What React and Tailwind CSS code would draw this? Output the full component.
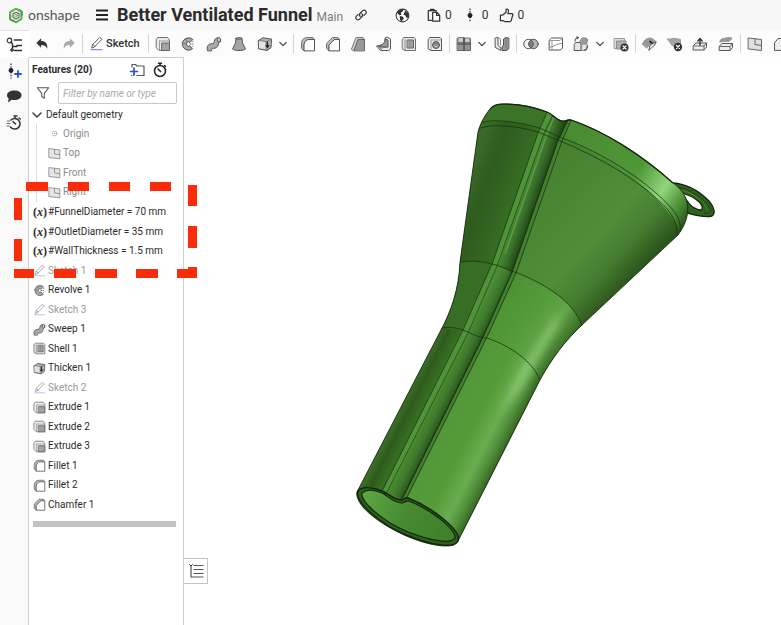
import React, { useState } from 'react';
import clsx from 'clsx';

const Svg = ({ children, className = 'w-4 h-4', box = '0 0 16 16' }) => (
  <svg
    viewBox={box}
    className={clsx('shrink-0', className)}
    fill="none"
    stroke="#555"
    strokeWidth="1"
    strokeLinejoin="round"
    strokeLinecap="round"
    aria-hidden="true"
  >
    {children}
  </svg>
);

const icons = {
  extrude: (
    <>
      <path d="M1.500 3L3 1.500h9.500L14.500 4v10.500H4L1.500 12z" fill="#ececec" stroke="#707070" />
      <path d="M4.500 5h9.500M4.500 5V14" stroke="#999" />
      <path d="M7 7h7.500v7.500H7z" fill="#a2a2a2" stroke="#666" />
    </>
  ),
  revolve: (
    <>
      <path d="M12.500 3.200A6.200 6.200 0 1 0 12.500 12.800L9.800 9.800A2.200 2.200 0 1 1 9.800 6.200z" fill="#aaa" />
      <path d="M5.500 2.500l1.500 3M2 7l3.500.7" stroke="#777" />
      <path d="M10 8h1M12.500 8h.5M13 5.500l.2.200M13 10.500l.2-.2" stroke="#555" />
    </>
  ),
  sweep: (
    <>
      <path d="M1.500 14.500C.5 11 1.500 8.500 4.500 8c2.500-.5 3.500-.5 3.800-2.500C8.600 3 10 1.800 12.500 1.800l2 4c-2 .2-2 1.700-2.300 3.200-.6 2.700-2.500 3.300-4.700 3.300-1.500 0-1.800.7-2 2.200z" fill="#aaa" />
      <ellipse cx="13" cy="3.800" rx="1.600" ry="2.200" fill="#ddd" />
    </>
  ),
  loft: (
    <>
      <path d="M5 2.500L4.500 7 1.500 13c2.500 2 10.500 2 13 0l-3-6L11 2.500z" fill="#a4a4a4" />
      <path d="M5 2.500c1.500-1 4.500-1 6 0-1.500 1-4.500 1-6 0z" fill="#ddd" />
    </>
  ),
  thicken: (
    <>
      <path d="M1.500 4.500L6 1.800l8.500 1.400-.5 8.500-4 2.800-8-1.500z" fill="#b5b5b5" />
      <path d="M1.500 4.500l8 1.200 5-2.500M9.500 5.700l.5 8.800" stroke="#777" />
      <path d="M2 5l6 1v7l-6-1z" fill="#e4e4e4" stroke="none" />
      <path d="M10.500 6v5M9 9.500l1.500 2 1.500-2" stroke="#222" strokeWidth="1.200" />
    </>
  ),
  fillet: (
    <>
      <path d="M1.500 12V7.500C1.500 4 4 1.500 7.500 1.500H13l1.500 2-6 .5C6 4 4 6 4 9v5.500z" fill="#bdbdbd" stroke="#707070" />
      <path d="M4 14.500V9c0-3 2-5.500 5-5.500h5.500v11z" fill="#fff" />
    </>
  ),
  chamfer: (
    <>
      <path d="M1.500 12V7.500l6-6H13l1.500 2H9.500L4 9v5.500z" fill="#bdbdbd" stroke="#707070" />
      <path d="M4 14.500V9l5.500-5.500h5v11z" fill="#fff" />
    </>
  ),
  draft: (
    <>
      <path d="M1.500 13L6 1.500h7l1.500 2-5 .5L4 14.500z" fill="#ccc" stroke="#777" />
      <path d="M4 14.500L8 3.500h6.500v11z" fill="#999" stroke="#666" />
    </>
  ),
  rib: (
    <>
      <path d="M1 10l8-2V2l2-1 3.500 2v10l-2 1.500H5z" fill="#eee" />
      <path d="M3 10.500C7 9 9 6 9.500 3l2.500 1v7H7z" fill="#999" />
      <path d="M1 10l4 2v2.500M5 12l7-1" stroke="#777" />
    </>
  ),
  shell: (
    <>
      <path d="M1.500 3L3 1.500h10l1.500 1.500v11.500H4L1.500 13z" fill="#e8e8e8" stroke="#707070" />
      <path d="M6.500 4h6v8h-6z" fill="#a2a2a2" stroke="#666" />
      <path d="M4 3.500v10.500M9 4v8" stroke="#888" />
    </>
  ),
  hole: (
    <>
      <path d="M1.500 3L3 1.500h10l1.500 1.500v11.500H4L1.500 13z" fill="#f1f1f1" />
      <path d="M4 4h10M4 4v10" stroke="#999" />
      <circle cx="9" cy="9" r="3.500" fill="#888" />
      <path d="M7.200 9.700a2 2 0 0 0 3.600.2" stroke="#e2e2e2" />
    </>
  ),
  pattern: (
    <>
      <path d="M1.500 2.500h13v12h-13z" fill="#929292" stroke="#666" />
      <path d="M3 1.500h4.500v5H2V2zM9 2h5v4.500H9z" fill="#ccc" stroke="#777" />
      <path d="M8 1.500v13M1.500 8h13" stroke="#444" strokeWidth="1.200" />
    </>
  ),
  mirror: (
    <>
      <path d="M1.500 2L4 1.500v8l3 2.500v2.500l-5.500-3z" fill="#ececec" />
      <path d="M4 1.500L6.500 3v6" stroke="#888" />
      <path d="M14.500 2L11.500 1.500 9.500 3v6L8 11v3.500h4.500l2-1.500z" fill="#999" />
      <path d="M12 2v12" stroke="#777" />
    </>
  ),
  boolean: (
    <>
      <circle cx="5.500" cy="8" r="4.700" fill="#f4f4f4" />
      <circle cx="10.500" cy="8" r="4.700" fill="#b4b4b4" />
      <path d="M8 4a4.700 4.700 0 0 1 0 8 4.700 4.700 0 0 1 0-8z" fill="#808080" />
    </>
  ),
  split: (
    <>
      <path d="M1.500 4l2-2h11v10l-2 2h-11z" fill="#fff" />
      <path d="M1.500 4.500h10.500l2.500-2.500M4 5v8.500" stroke="#999" />
      <path d="M2 11c4 0 6-3.500 12-3.500" stroke="#888" />
    </>
  ),
  transform: (
    <>
      <path d="M1.500 8l1-1.500H7L8 8v6.500H1.500z" fill="#e6e6e6" />
      <path d="M9 9l1-1.500h4V13l-1 1.500H9z" fill="#e6e6e6" stroke="#888" />
      <path d="M7 5l2-3h4l2 2-2 4H9z" fill="#999" stroke="#888" />
      <path d="M2 5c0-2 1-3.500 3-3.500M4 .8l1.500.8L4.200 3M14.500 10c0 2-1 3.500-3 4" stroke="#333" />
    </>
  ),
  deletePart: (
    <>
      <path d="M1.500 2.500h10v10h-10z" fill="#ddd" stroke="#999" />
      <path d="M4 5h9v8H4z" fill="#b0b0b0" stroke="#888" />
      <circle cx="11.500" cy="11.500" r="4" fill="#333" stroke="none" />
      <path d="M10 10l3 3M13 10l-3 3" stroke="#fff" strokeWidth="1.200" />
    </>
  ),
  moveFace: (
    <>
      <path d="M.5 8C2 3.500 6 1 10 2.500L14.500 6 8 8l-3 4z" fill="#999" stroke="#999" />
      <path d="M7 14l1-5 6-3c-1 3-2 4-3 4.500-1 1-2 2-4 3.500z" fill="#eee" />
      <path d="M8 5.500l2 1.500" stroke="#222" strokeWidth="1.600" />
    </>
  ),
  deleteFace: (
    <>
      <path d="M.5 3c3 1 5-1.500 8-.5l5 1v8L6 10z" fill="#a4a4a4" stroke="#999" />
      <circle cx="11" cy="11" r="4.200" fill="#333" stroke="none" />
      <path d="M9.500 9.500l3 3M12.500 9.500l-3 3" stroke="#fff" strokeWidth="1.200" />
    </>
  ),
  replaceFace: (
    <>
      <path d="M1.500 9.500L4 7h10.500v4L12 14H1.500z" fill="#eee" />
      <path d="M1.500 10H12l2.500-3M12 10v4" stroke="#666" />
      <path d="M8 9V3M5.800 5L8 2.500 10.200 5" stroke="#333" strokeWidth="1.400" />
    </>
  ),
  offset: (
    <>
      <path d="M1.500 10L4 7.500h10.500v4L12 14.500H1.500z" fill="#eee" />
      <path d="M1.500 10.500H12l2.500-3M12 10.500v4" stroke="#666" />
      <path d="M2 5c2-4 4-2 6-3s4-.5 6 0c-1 1.500-2 3.500-4 3.500S5 5 2 6z" fill="#999" stroke="#999" />
    </>
  ),
  plane: (
    <>
      <path d="M1.500 2l13 1.500v11l-13-1.500z" fill="#e0e0e0" stroke="#666" />
      <path d="M8 3v5.500l6.500 1" stroke="#666" />
    </>
  ),
  frame: <path d="M1.500 14V7L5 2.500h9.500V14z" fill="#eee" />,
  sketch: (
    <>
      <path d="M3 12.500l1-3.500 7.500-7.500 2.300 2L6 11.500z" fill="#fff" />
      <path d="M4.200 9l2 2.200" />
      <path d="M2 14.500h12" stroke="#7c9bd6" strokeWidth="1.200" />
    </>
  ),
  origin: (
    <>
      <circle cx="8" cy="8" r="3" stroke="#999" />
      <circle cx="8" cy="8" r="1" fill="#888" stroke="none" />
    </>
  ),
};

const Icon = ({ name, className }) => <Svg className={className}>{icons[name]}</Svg>;

const Chevron = ({ className = 'w-2 h-2' }) => (
  <Svg box="0 0 10 8" className={className}>
    <path d="M1 2l4 4 4-4" strokeWidth="1.600" stroke="#444" />
  </Svg>
);

const Separator = () => <span className="w-px h-[19px] mx-[6px] bg-[#d4d4d4] shrink-0" />;

const ToolGroup = ({ names, className }) => (
  <div className={clsx('flex justify-between shrink-0', className)}>
    {names.map((name) => (
      <button key={name} type="button" aria-label={name}>
        <Icon name={name} />
      </button>
    ))}
  </div>
);

const DropButton = ({ label, className }) => (
  <button type="button" aria-label={label} className={clsx('shrink-0', className)}>
    <Chevron />
  </button>
);

const Header = () => (
  <header className="flex items-center h-[30px] pl-2 bg-[#f7f7f7] shrink-0">
    <a href="#home" className="flex items-center">
      <Svg box="0 0 16 18" className="w-4 h-[17px]">
        <path d="M1.800 11V5.500L8 1.800l3 1.700M13.800 5v7.500L8 16.200l-3-1.700" stroke="#58b947" strokeWidth="2.200" />
        <path d="M1.800 9v4l3.500 2M14 9V5l-3-2" stroke="#4aa83b" strokeWidth="2.200" />
        <path d="M8 5.500l3.200 1.800v3.600L8 12.700l-3.200-1.800V7.300z" stroke="#666" strokeWidth="1.300" />
        <circle cx="8" cy="9.100" r="1.300" stroke="#777" strokeWidth=".8" />
      </Svg>
      <span className="w-[50px] ml-1 font-[Lato,sans-serif] text-[14px] leading-4 text-[#555]">onshape</span>
    </a>
    <button type="button" aria-label="Menu" className="ml-[17px]">
      <Svg box="0 0 14 14" className="w-[14px] h-[14px]">
        <path d="M1 2.500h12M1 7h12M1 11.500h12" stroke="#222" strokeWidth="2" strokeLinecap="butt" />
      </Svg>
    </button>
    <h1 className="ml-2 text-[18px] leading-6 font-bold whitespace-nowrap text-[#2b2b2b]">Better Ventilated Funnel</h1>
    <span className="ml-1 pt-1 text-[12px] leading-6 text-[#7c7c7c]">Main</span>
    <button type="button" aria-label="Copy link" className="ml-[11px]">
      <Svg className="w-[14px] h-[14px]">
        <path d="M7 9.500a2.500 2.500 0 0 1 0-3.500l3-3a2.500 2.500 0 0 1 3.500 3.500L11.500 8.500M9 6.500a2.500 2.500 0 0 1 0 3.500l-3 3a2.500 2.500 0 0 1-3.500-3.500l2-2" stroke="#333" strokeWidth="1.400" />
      </Svg>
    </button>
    <button type="button" aria-label="Public document" className="ml-[27px]">
      <Svg className="w-[15px] h-[15px]">
        <circle cx="8" cy="8" r="6.800" stroke="#333" strokeWidth="1.100" fill="#fff" />
        <path d="M3 3.500C5 1.500 7 1.300 9 1.500L8 4 6 5l1 2-2 1-3-3zM5 8.500l3 .5 1.500 2L7 14.500 5.500 13zM11 3l3 2 .7 4-2 2-1.700-3-2-1z" fill="#333" stroke="none" />
      </Svg>
    </button>
    <div className="flex items-center ml-[17px] text-[12px] leading-4 text-[#333]">
      <Svg className="w-[14px] h-[15px]">
        <path d="M6 13.500H1.500V2.500h9V4M4 2.500V1h4v1.500" stroke="#333" strokeWidth="1.400" />
        <path d="M6.500 4.500h5L14.500 8v6.500h-8zM11 4.500V8h3.500" fill="#fff" stroke="#333" strokeWidth="1.400" />
      </Svg>
      <span className="ml-1">0</span>
      <Svg box="0 0 8 16" className="w-2 h-[15px] ml-[14px]">
        <path d="M4 1v14" stroke="#333" strokeWidth="1.400" strokeDasharray=".5 2.500" />
        <circle cx="4" cy="8" r="2.600" fill="#222" stroke="none" />
      </Svg>
      <span className="ml-2">0</span>
      <Svg className="w-[15px] h-[15px] ml-[10px]">
        <path d="M1.500 7.500H4l3.500-3V1.500c2-.7 3 .5 2.500 2.500L9.500 6H14c1 0 1 1.500.5 2L13 13.500c-.2.800-.8 1-1.500 1H6L4.500 13.500h-3z" stroke="#333" strokeWidth="1.300" />
      </Svg>
      <span className="ml-1">0</span>
    </div>
  </header>
);

const Rail = () => (
  <nav className="flex flex-col items-center w-[29px] shrink-0 bg-[#f9f9f9] border-r border-[#d0d0d0]">
    <button type="button" aria-label="Feature list" className="flex items-center justify-center w-[29px] h-7 bg-white border-t border-[#ddd]">
      <Svg className="w-4 h-4">
        <circle cx="3.500" cy="3.500" r="2.300" stroke="#333" strokeWidth="1.200" />
        <path d="M5 5l1.500 2v5M6.500 9.500H11" stroke="#333" strokeWidth="1.400" />
        <path d="M8.500 3h7M11 8.500h4.500M8.500 13.500h7" stroke="#333" strokeWidth="1.600" />
        <circle cx="6" cy="13" r="1.400" fill="#333" />
      </Svg>
    </button>
    <button type="button" aria-label="Versions" className="mt-[5px]">
      <Svg className="w-4 h-4">
        <path d="M5 1v14" stroke="#333" strokeWidth="1.300" strokeDasharray=".5 2.300" />
        <circle cx="5" cy="7.500" r="2.400" fill="#222" stroke="none" />
        <path d="M9 11h6M12 8v6" stroke="#2355c4" strokeWidth="1.800" />
      </Svg>
    </button>
    <button type="button" aria-label="Comments" className="mt-[9px]">
      <Svg className="w-4 h-4">
        <path d="M8.500 2.500c4 0 7 2 7 4.800s-3 4.800-7 4.800c-1 0-2-.1-2.800-.4L2 14.500l.7-4C1.500 9.600 1 8.500 1 7.300c0-2.800 3.500-4.800 7.500-4.800z" fill="#333" stroke="none" />
      </Svg>
    </button>
    <button type="button" aria-label="History" className="mt-[11px]">
      <Svg className="w-4 h-4">
        <path d="M5 5a5.300 5.300 0 1 1-.5 7M8 1h3M13 3l1.300 1M9 3V1.500M7 6.500l2.500 2.500" stroke="#333" strokeWidth="1.500" />
        <path d="M1.500 6H4M1 8.500h3M1 11h2.500" stroke="#666" />
      </Svg>
    </button>
  </nav>
);

const Toolbar = () => (
  <div className="flex items-center h-[27px] pl-[6px] overflow-hidden bg-[#fcfcfc] shrink-0">
    <button type="button" aria-label="Undo" className="shrink-0">
      <Svg className="w-[14px] h-[14px]">
        <path d="M7 1.500v3.200c5 0 7.500 3 7 8.800-1.500-3.500-3.500-4.500-7-4.500v3.300L1.500 6.800z" fill="#333" stroke="none" />
      </Svg>
    </button>
    <button type="button" aria-label="Redo" className="ml-[13px] shrink-0">
      <Svg className="w-[14px] h-[14px]">
        <path d="M9 1.500v3.200c-5 0-7.500 3-7 8.800 1.500-3.500 3.500-4.500 7-4.500v3.300l5.500-5.500z" fill="#aaa" stroke="none" />
      </Svg>
    </button>
    <Separator />
    <button type="button" className="flex items-center gap-[2px] pr-[2px] text-[11px] leading-4 font-medium text-[#333] shrink-0">
      <Icon name="sketch" className="w-[15px] h-[15px]" />
      Sketch
    </button>
    <Separator />
    <ToolGroup className="w-[118px]" names={['extrude', 'revolve', 'sweep', 'loft', 'thicken']} />
    <DropButton label="More solids" className="ml-[6px]" />
    <Separator />
    <ToolGroup className="w-[143px]" names={['fillet', 'chamfer', 'draft', 'rib', 'shell', 'hole']} />
    <Separator />
    <ToolGroup className="w-4" names={['pattern']} />
    <DropButton label="More patterns" className="ml-[6px]" />
    <ToolGroup className="w-4 ml-2" names={['mirror']} />
    <Separator />
    <ToolGroup className="w-[66px]" names={['boolean', 'split', 'transform']} />
    <DropButton label="More transforms" className="ml-[7px]" />
    <ToolGroup className="w-4 ml-[9px]" names={['deletePart']} />
    <Separator />
    <ToolGroup className="w-[92px]" names={['moveFace', 'deleteFace', 'replaceFace', 'offset']} />
    <Separator />
    <ToolGroup className="w-[42px]" names={['plane', 'frame']} />
  </div>
);

const geometry = [
  { name: 'Origin', icon: 'origin' },
  { name: 'Top', icon: 'plane' },
  { name: 'Front', icon: 'plane' },
  { name: 'Right', icon: 'plane' },
];

const features = [
  { name: '#FunnelDiameter = 70 mm', variable: true },
  { name: '#OutletDiameter = 35 mm', variable: true },
  { name: '#WallThickness = 1.5 mm', variable: true },
  { name: 'Sketch 1', icon: 'sketch', hidden: true },
  { name: 'Revolve 1', icon: 'revolve' },
  { name: 'Sketch 3', icon: 'sketch', hidden: true },
  { name: 'Sweep 1', icon: 'sweep' },
  { name: 'Shell 1', icon: 'shell' },
  { name: 'Thicken 1', icon: 'thicken' },
  { name: 'Sketch 2', icon: 'sketch', hidden: true },
  { name: 'Extrude 1', icon: 'extrude' },
  { name: 'Extrude 2', icon: 'extrude' },
  { name: 'Extrude 3', icon: 'extrude' },
  { name: 'Fillet 1', icon: 'fillet' },
  { name: 'Fillet 2', icon: 'fillet' },
  { name: 'Chamfer 1', icon: 'chamfer' },
];

const FeaturePanel = () => {
  const [filter, setFilter] = useState('');
  const [open, setOpen] = useState(true);
  const match = (item) => item.name.toLowerCase().includes(filter.toLowerCase());

  return (
    <aside className="w-[155px] shrink-0 bg-white border-t border-r border-[#d0d0d0] text-[10px] leading-4 text-[#2b2b2b]">
      <div className="flex items-center h-6 pl-[3px] pr-[15px]">
        <h2 className="flex-1 font-bold">Features (20)</h2>
        <button type="button" aria-label="New folder">
          <Svg className="w-4 h-4">
            <path d="M3 5V2.500h3.500L8 4h7v9.500H8" strokeWidth="1.200" />
            <path d="M1.500 9.500h7M5 6v7" stroke="#2355c4" strokeWidth="1.700" />
            <path d="M3 13.500h-.5" />
          </Svg>
        </button>
        <button type="button" aria-label="Regeneration times" className="ml-[7px]">
          <Svg className="w-4 h-4">
            <circle cx="8" cy="9" r="5.500" stroke="#222" strokeWidth="1.500" />
            <path d="M6.500 1.200h3M8 1.500V3M12.500 3.500l1 1M6 7l2.500 2.500" stroke="#222" strokeWidth="1.500" />
          </Svg>
        </button>
      </div>
      <div className="flex items-center pl-[7px] pr-[6px]">
        <Svg className="w-[14px] h-[14px]">
          <path d="M1.500 2h13L9.500 8.500V14l-3-2V8.500z" strokeWidth="1.200" />
        </Svg>
        <input
          type="text"
          aria-label="Filter features"
          value={filter}
          onChange={(e) => setFilter(e.target.value)}
          placeholder="Filter by name or type"
          className="flex-1 min-w-0 h-[22px] ml-2 px-1 bg-white border border-[#c8c8c8] rounded-[2px] text-[10px] italic placeholder:text-[#aaa]"
        />
      </div>
      <button type="button" onClick={() => setOpen(!open)} className="flex items-center h-[19px] pl-[3px] mt-[1px]">
        <Chevron className={clsx('w-[10px] h-2', !open && '-rotate-90')} />
        <span className="ml-1">Default geometry</span>
      </button>
      {open && (
        <ul className="ml-[7px] border-l border-[#ddd] text-[#8a8a8a]">
          {geometry.filter(match).map((item) => (
            <li key={item.name} className="flex items-center pl-[11px] h-[19px] even:h-5">
              <Icon name={item.icon} className="w-[13px] h-[13px] opacity-80" />
              <span className="ml-[2px]">{item.name}</span>
            </li>
          ))}
        </ul>
      )}
      <ul>
        {features.filter(match).map((item) => (
          <li key={item.name} className={clsx('flex items-center pl-1 h-5 even:h-[19px] whitespace-nowrap', item.hidden && 'text-[#999]')}>
            {item.variable ? (
              <span className="w-[13px] font-['Liberation_Serif',serif] text-[12px] font-bold">
                (<i>x</i>)
              </span>
            ) : (
              <Icon name={item.icon} className={clsx('w-[13px] h-[13px]', item.hidden && 'opacity-60')} />
            )}
            <span className="ml-[2px]">{item.name}</span>
          </li>
        ))}
      </ul>
      <div className="h-[6px] ml-1 mr-[7px] mt-[7px] bg-[#c2c2c2]" />
    </aside>
  );
};

const BODY =
  'M478 132C480 124 485 115 490 109C493 105 498 104 504 104C520 104 534 107 547 112C553 114 556 120 562 121C565 122 567 119 571 120C604 131 642 155 673 183C680 188 684 193 686 199C690 210 687 223 678 235L582 325C565 341 552 358 540 380L458 541C456 545 452 546 446 546C424 546 390 531 370 514C360 506 354 495 358 490L442 328C450 313 459 290 460 262Z';

const OPENING =
  'M358 491C362 486 373 487 382 491C388 493 393 500 402 500C404 500 405 497 408 498C431 507 462 530 458 541C454 549 430 545 406 535C380 524 354 502 358 491Z';

const Funnel = () => (
  <svg viewBox="184 57 597 567" className="block w-full" fill="none" stroke="#13260c" strokeWidth="1" role="img" aria-label="Funnel model">
    <defs>
      <clipPath id="body"><path d={BODY} /></clipPath>
      <linearGradient id="coneLeft" gradientUnits="userSpaceOnUse" x1="466" y1="190" x2="518" y2="208">
        <stop offset="0" stopColor="#39682a" />
        <stop offset=".3" stopColor="#2e5b1e" />
        <stop offset="1" stopColor="#387024" />
      </linearGradient>
      <linearGradient id="coneRight" gradientUnits="userSpaceOnUse" x1="540" y1="184" x2="636" y2="274">
        <stop offset="0" stopColor="#488231" />
        <stop offset=".58" stopColor="#4f8f37" />
        <stop offset=".8" stopColor="#467d31" />
        <stop offset="1" stopColor="#2c551c" />
      </linearGradient>
      <linearGradient id="rim" gradientUnits="userSpaceOnUse" x1="565" y1="130" x2="690" y2="215">
        <stop offset="0" stopColor="#4a8a32" />
        <stop offset=".55" stopColor="#4f9737" />
        <stop offset=".76" stopColor="#92d67c" />
        <stop offset=".9" stopColor="#4e9038" />
        <stop offset="1" stopColor="#2b581c" />
      </linearGradient>
      <linearGradient id="neck" gradientUnits="userSpaceOnUse" x1="500" y1="300" x2="566" y2="348">
        <stop offset="0" stopColor="#4d9134" />
        <stop offset=".45" stopColor="#559c3b" />
        <stop offset=".72" stopColor="#63a54a" />
        <stop offset="1" stopColor="#35681f" />
      </linearGradient>
      <linearGradient id="tube" gradientUnits="userSpaceOnUse" x1="443" y1="425" x2="504" y2="456">
        <stop offset="0" stopColor="#52973a" />
        <stop offset=".42" stopColor="#559c38" />
        <stop offset=".68" stopColor="#69ad51" />
        <stop offset=".84" stopColor="#4f8e39" />
        <stop offset="1" stopColor="#2e5c1d" />
      </linearGradient>
      <linearGradient id="tubeLeft" gradientUnits="userSpaceOnUse" x1="398" y1="412" x2="424" y2="425">
        <stop offset="0" stopColor="#3d6f2a" />
        <stop offset=".3" stopColor="#2e5b1d" />
        <stop offset="1" stopColor="#417d2b" />
      </linearGradient>
      <linearGradient id="grooveTop" gradientUnits="userSpaceOnUse" x1="519" y1="200" x2="536" y2="206">
        <stop offset="0" stopColor="#4c8e35" />
        <stop offset=".5" stopColor="#38712a" />
        <stop offset="1" stopColor="#204315" />
      </linearGradient>
      <linearGradient id="grooveLow" gradientUnits="userSpaceOnUse" x1="429" y1="410" x2="445" y2="418">
        <stop offset="0" stopColor="#4b8c34" />
        <stop offset=".5" stopColor="#3c762b" />
        <stop offset="1" stopColor="#23491a" />
      </linearGradient>
      <linearGradient id="inside" gradientUnits="userSpaceOnUse" x1="366" y1="498" x2="446" y2="532">
        <stop offset="0" stopColor="#5ba443" />
        <stop offset=".5" stopColor="#478a31" />
        <stop offset="1" stopColor="#40802b" />
      </linearGradient>
      <filter id="soft" x="-50%" y="-50%" width="200%" height="200%"><feGaussianBlur stdDeviation="5" /></filter>
    </defs>

    {/* hanging ring */}
    <path fillRule="evenodd" d="M673 183C688 184 701 193 709 201C714 207 716 213 712 216C704 218 695 215 687 213L673 200ZM682 193C688 203 692 209 701 210C706 206 696 197 682 193Z" fill="#2f6220" strokeWidth="1.300" />
    <path d="M676 187C690 188 703 198 710 208C712 212 709 214 704 213" stroke="#1c3d12" />
    <path d="M680 190C692 192 706 202 707 210" stroke="#4b8a36" />

    <g clipPath="url(#body)" stroke="none">
      <path d="M340 90H740V560H340z" fill="url(#coneRight)" />
      <path d="M571 115L562 138C604 155 660 190 680 231L720 220L690 170Z" fill="url(#rim)" />
      <path d="M515 272C546 284 574 302 582 326L620 340L560 400L540 380C533 362 511 345 486 338Z" fill="url(#neck)" />
      <path d="M486 338C511 345 533 362 540 380L560 400L460 560L400 500Z" fill="url(#tube)" />
      <path d="M560 312C545 338 520 372 502 414C510 402 530 374 540 352C550 336 558 326 560 312Z" fill="#a5e38d" filter="url(#soft)" />
      <path d="M470 90H552L538 133L492 264L463 331L440 320V250Z" fill="url(#coneLeft)" />
      <path d="M475 100H555L541 129C520 121 490 118 479 126Z" fill="#3b7327" />
      <path d="M492 264C480 261 470 260 455 263L435 330L463 331Z" fill="#376d25" />
      <path d="M435 327L463 331L382 492L340 500Z" fill="url(#tubeLeft)" />
      <path d="M547 111L538 133L492 264L462 331L382 492H387L468 333L497 266L544 133L553 114Z" fill="#4f9438" />
      <path d="M553 114L544 133L497 266L468 333L483 337L512 272L558 140L568 119Z" fill="url(#grooveTop)" />
      <path d="M497 266L468 333L387 492L402 500L483 337L512 272Z" fill="url(#grooveLow)" />
      <path d="M568 119L558 140L512 272L483 337L402 500L407 498L487 337L516 273L562 141L571 119Z" fill="#42802e" />
      <path d="M554 117L547 134L505 254" stroke="#5c9d45" strokeWidth="1.500" />
    </g>

    <g strokeWidth=".8" stroke="#193510">
      <path d="M547 112L538 133L492 264L463 330L382 491" />
      <path d="M553 115L544 133L497 266L468 333L387 492" strokeWidth=".6" />
      <path d="M568 120L558 140L512 272L483 337L402 499" strokeWidth="1.200" />
      <path d="M571 120L562 141L516 273L487 337L407 497" />
      <path d="M481 123C492 118 522 122 542 129L562 138C604 153 650 183 673 210C680 219 681 225 680 232" />
      <path d="M479 129C488 123 518 126 538 132L560 141C602 158 645 184 667 209C674 217 677 225 677 234" />
      <path d="M461 262C478 259 496 264 515 272C546 284 574 302 582 326" />
      <path d="M442 328C452 326 460 329 468 332C474 335 480 338 487 338C511 346 533 362 540 380" />
    </g>
    <path d={BODY} strokeWidth=".8" />
    <path d="M490 109C493 105 498 104 504 104C520 104 534 107 547 112C553 114 556 120 562 121C565 122 567 119 571 120C604 131 642 155 673 183" strokeWidth="1.200" />

    <path d={OPENING} fill="#2d5f1d" strokeWidth="1.500" />
    <path d="M362 493C366 489 374 490 382 493C389 497 394 503 402 503C405 503 406 500 409 501C430 509 456 529 455 538C451 545 429 540 408 532C384 522 360 502 362 493Z" fill="url(#inside)" strokeWidth="1.200" />
  </svg>
);

// dashed marker around the variable rows
const Callout = () => (
  <svg viewBox="0 0 184 96" className="absolute top-[182px] left-[14px] w-[184px] h-24 pointer-events-none" fill="#fb2c0a" aria-hidden="true">
    <path d="M12 0h22v9h-22zM54 0h21v9h-21zM95 0h21v9h-21zM136 0h21v9h-21z" />
    <path d="M174 3h9v21h-9zM174 44h9v22h-9zM174 85h9v11h-9z" />
    <path d="M0 16h8v22h-8zM0 57h8v22h-8z" />
    <path d="M0 87h20v9h-20zM40 87h22v9h-22zM81 87h22v9h-22zM122 87h22v9h-22zM163 87h20v9h-20z" />
  </svg>
);

const App = () => (
  <div className="relative flex flex-col min-h-screen overflow-hidden bg-white font-[Roboto,'Open_Sans',sans-serif]">
    <Header />
    <div className="flex flex-1">
      <Rail />
      <div className="flex flex-col flex-1 min-w-0">
        <Toolbar />
        <div className="flex flex-1">
          <FeaturePanel />
          <main className="relative flex-1 min-w-0">
            <Funnel />
            <button type="button" aria-label="Toggle panel" className="absolute bottom-[41px] left-0 flex items-center justify-center w-6 h-[26px] bg-white border border-l-0 border-[#c4c4c4]">
              <Svg className="w-4 h-4">
                <path d="M6 2.500h9M6 6.500h9M6 10.500h9M6 14h9M3 3v11h3" stroke="#555" strokeWidth="1.200" />
                <path d="M1.500 1.500L3 3l1.500-1.500" stroke="#333" />
              </Svg>
            </button>
          </main>
        </div>
      </div>
    </div>
    <Callout />
  </div>
);

export default App;
